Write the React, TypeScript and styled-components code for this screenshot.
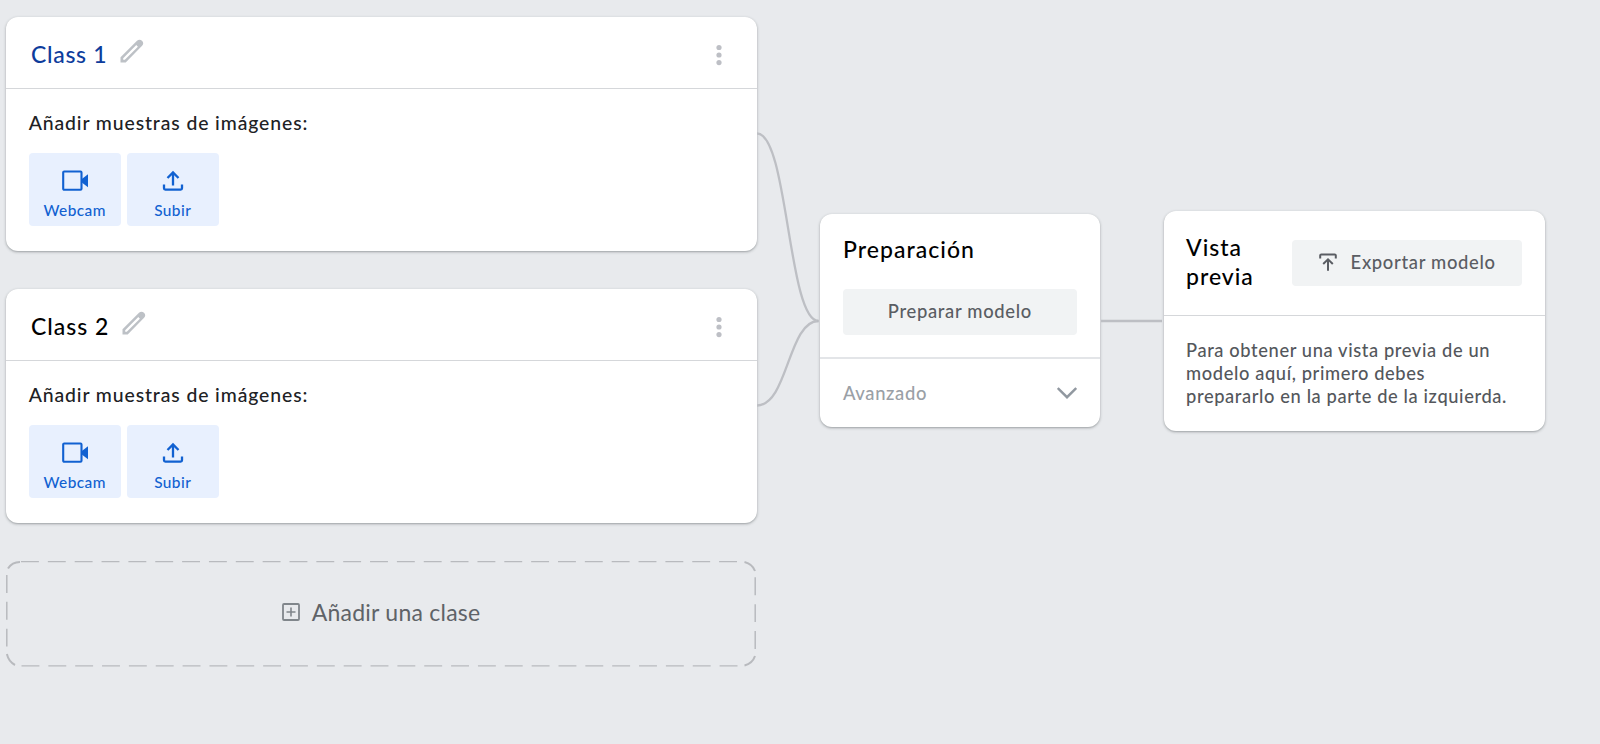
import React from 'react';
import styled, { createGlobalStyle } from 'styled-components';

const GlobalStyle = createGlobalStyle`
  * { box-sizing: border-box; }
  body {
    margin: 0;
    background: #e8eaed;
    font-family: Lato, "Liberation Sans", sans-serif;
    -webkit-font-smoothing: antialiased;
  }
  button { font-family: inherit; border: 0; margin: 0; padding: 0; cursor: pointer; }
`;

const Board = styled.main`
  display: flex;
  align-items: flex-start;
  width: 1600px;
  height: 744px;
  padding: 16.5px 0 0 6.4px;
  overflow: hidden;
`;

const ClassColumn = styled.section`
  display: flex;
  flex-direction: column;
  gap: 38px;
  width: 750.6px;
  flex: none;
`;

const Card = styled.article<{ $width?: number; $top?: number }>`
  flex: none;
  width: ${(p) => (p.$width ? `${p.$width}px` : '100%')};
  margin-top: ${(p) => p.$top ?? 0}px;
  background: #fff;
  border-radius: 12px;
  box-shadow: 0 1px 2px rgba(60, 64, 67, 0.34), 0 1px 3px 1px rgba(60, 64, 67, 0.09);
`;

const ClassHeader = styled.header`
  display: flex;
  align-items: center;
  height: 72.5px;
  padding: 5px 30px 0 24.6px;
  border-bottom: 1px solid #d5d7da;
`;

const Title = styled.h2`
  margin: 0;
  font-size: 23px;
  line-height: 29px;
  font-weight: 500;
  letter-spacing: 0.7px;
  color: #000;
`;

const ClassTitle = styled(Title)<{ $color: string; $spacing: number }>`
  color: ${(p) => p.$color};
  letter-spacing: ${(p) => p.$spacing}px;
`;

const PencilIcon = styled.svg`
  width: 24px;
  height: 24px;
  margin: -7px 0 0 12.5px;
`;

const MenuIcon = styled.svg`
  width: 16px;
  height: 24px;
  margin: 0 0 0 auto;
`;

const ClassBody = styled.div`
  height: 161.5px;
  padding: 22px 22.3px 0;
`;

const Prompt = styled.p`
  margin: 0 0 18px;
  font-size: 19.4px;
  line-height: 24px;
  font-weight: 500;
  letter-spacing: 0.89px;
  color: #202124;
`;

const SourceRow = styled.div`
  display: flex;
  gap: 6px;
`;

const SourceButton = styled.button`
  display: flex;
  flex-direction: column;
  align-items: center;
  width: 92px;
  height: 73px;
  padding-top: 14px;
  border-radius: 4px;
  background: #e8f0fe;
  color: #1161d1;
  font-size: 15.4px;
  line-height: 20px;
  font-weight: 500;
  letter-spacing: 0.45px;

  svg { width: 28px; height: 28px; margin-bottom: 5px; }
`;

const AddClass = styled.button`
  position: relative;
  display: flex;
  align-items: center;
  width: 750px;
  height: 105.5px;
  padding: 0 0 3px 275.3px;
  background: transparent;
  color: #5f6368;
  font-size: 23px;
  line-height: 28px;
  letter-spacing: 0.24px;
`;

const DashedOutline = styled.svg`
  position: absolute;
  top: 0;
  left: 0;
  width: 750px;
  height: 106px;
  fill: none;
  stroke: #b8babe;
`;

const PlusIcon = styled.svg`
  width: 18px;
  height: 18px;
  margin: 0 12px 0 0;
`;

const Connector = styled.svg<{ $width: number }>`
  flex: none;
  width: ${(p) => p.$width}px;
  height: 500px;
  fill: none;
  stroke: #bdbfc4;
  stroke-width: 2.3;
`;

const TrainTop = styled.div`
  height: 145px;
  padding: 21px 22.5px 0;
  border-bottom: 2px solid #e3e5e8;
`;

const GreyButton = styled.button<{ $width: number }>`
  display: flex;
  align-items: center;
  justify-content: center;
  flex: none;
  width: ${(p) => p.$width}px;
  height: 46px;
  padding-bottom: 1px;
  border-radius: 4px;
  background: #f1f3f4;
  color: #5a5d63;
  font-size: 18.4px;
  line-height: 24px;
  font-weight: 500;
  letter-spacing: 0.68px;

  svg { width: 18px; height: 18px; margin: 0 14px 0 0; }
`;

const TrainTitle = styled(Title)`
  margin-bottom: 25px;
  letter-spacing: 1.05px;
`;

const Advanced = styled.div`
  display: flex;
  align-items: center;
  justify-content: space-between;
  height: 68.5px;
  padding: 0 23px 0 22.5px;
  color: #9aa0a6;
  font-size: 18.4px;
  font-weight: 500;
  letter-spacing: 0.65px;

  svg { width: 20px; height: 12px; }
`;

const PreviewHeader = styled.header`
  display: flex;
  align-items: center;
  justify-content: space-between;
  height: 105px;
  padding: 0 23px 0 22.5px;
  border-bottom: 1px solid #d5d7da;
`;

const PreviewTitle = styled(Title)`
  width: 80px;
  padding-bottom: 2px;
  letter-spacing: 0.95px;
`;

const PreviewText = styled.p`
  height: 115px;
  margin: 0;
  padding: 23px 22.5px 0;
  font-size: 18.3px;
  line-height: 23px;
  font-weight: 500;
  letter-spacing: 0.61px;
  color: #54575c;
  white-space: nowrap;
`;

function ClassCard({ name, color, spacing }: { name: string; color: string; spacing: number }) {
  return (
    <Card>
      <ClassHeader>
        <ClassTitle $color={color} $spacing={spacing}>{name}</ClassTitle>
        <PencilIcon viewBox="0 0 24 24" fill="none">
          <path
            d="M.5 23.4V18.2L17 1.8Q19.5-.5 22 1.8 24.4 4.3 22.1 6.8L5.7 23.4Z M3.2 19.2V20.8H4.8L17.9 7.7 16.3 6.1Z"
            fill="#bdc1c6"
            fillRule="evenodd"
          />
        </PencilIcon>
        <MenuIcon viewBox="0 0 16 24" fill="#bdbfc5">
          <circle cx="8" cy="4.5" r="2.6" />
          <circle cx="8" cy="12" r="2.6" />
          <circle cx="8" cy="19.6" r="2.6" />
        </MenuIcon>
      </ClassHeader>
      <ClassBody>
        <Prompt>Añadir muestras de imágenes:</Prompt>
        <SourceRow>
          <SourceButton>
            <svg viewBox="0 0 28 28">
              <rect x="2.2" y="4.5" width="18.3" height="18.2" rx="1" fill="none" stroke="currentColor" strokeWidth="2.1" />
              <path d="M20.5 12.2L27 7.2V20.2L20.5 15.2Z" fill="currentColor" />
            </svg>
            Webcam
          </SourceButton>
          <SourceButton>
            <svg viewBox="0 0 28 28" fill="none" stroke="currentColor" strokeWidth="2.3">
              <path d="M14 18.5V5.8M8.5 11L14 5.5 19.5 11M5 17.5V21.3Q5 22.6 6.3 22.6H21.7Q23 22.6 23 21.3V17.5" />
            </svg>
            Subir
          </SourceButton>
        </SourceRow>
      </ClassBody>
    </Card>
  );
}

export default function App() {
  return (
    <>
      <GlobalStyle />
      <Board>
        <ClassColumn>
          <ClassCard name="Class 1" color="#0d3c9c" spacing={0.7} />
          <ClassCard name="Class 2" color="#000" spacing={1} />
          <AddClass>
            <DashedOutline viewBox="0 0 750 106">
              <g strokeWidth="1.2" strokeDasharray="17.9 8.95">
                <path d="M15 .6H731" />
                <path d="M15.5 104.9H732" />
              </g>
              <g strokeWidth="1.5" strokeDasharray="17.9 8.95">
                <path d="M.8 14V86" />
                <path d="M749.2 16.3V89" />
              </g>
              <g strokeWidth="2">
                <path d="M2 7.5Q6 1 14 1" />
                <path d="M.9 93Q2.5 100.5 9 104" />
                <path d="M738.5 1Q746.5 3 749 10" />
                <path d="M749 95Q746.5 102.5 738.5 104.5" />
              </g>
            </DashedOutline>
            <PlusIcon viewBox="0 0 18 18" fill="none" stroke="#80868b">
              <rect x="1" y="1" width="16" height="16" rx="1" strokeWidth="1.8" />
              <path d="M9 4.5V13.5M4.5 9H13.5" strokeWidth="1.6" />
            </PlusIcon>
            Añadir una clase
          </AddClass>
        </ClassColumn>
        <Connector $width={63.4} viewBox="0 0 63.4 500">
          <path d="M0 116.5C31 116.5 31 304 61.5 304" />
          <path d="M0 388.5C31 388.5 31 304 61.5 304" />
        </Connector>
        <Card $width={279.6} $top={197}>
          <TrainTop>
            <TrainTitle>Preparación</TrainTitle>
            <GreyButton $width={234}>Preparar modelo</GreyButton>
          </TrainTop>
          <Advanced>
            Avanzado
            <svg viewBox="0 0 20 12" fill="none" stroke="#9198a0" strokeWidth="2.4">
              <path d="M.8 1L10 10.2 19.2 1" />
            </svg>
          </Advanced>
        </Card>
        <Connector $width={63.6} viewBox="0 0 63.6 500">
          <path d="M1 304H62" />
        </Connector>
        <Card $width={381.6} $top={194}>
          <PreviewHeader>
            <PreviewTitle>Vista previa</PreviewTitle>
            <GreyButton $width={230}>
              <svg viewBox="0 0 18 18" fill="none" stroke="currentColor" strokeWidth="2">
                <path d="M1.2 5.6V2.5Q1.2 1.4 2.3 1.4H15.7Q16.8 1.4 16.8 2.5V5.6M9 17.8V6.5M4.2 11L9 6.3 13.8 11" />
              </svg>
              Exportar modelo
            </GreyButton>
          </PreviewHeader>
          <PreviewText>
            Para obtener una vista previa de un
            <br />
            modelo aquí, primero debes
            <br />
            prepararlo en la parte de la izquierda.
          </PreviewText>
        </Card>
      </Board>
    </>
  );
}
